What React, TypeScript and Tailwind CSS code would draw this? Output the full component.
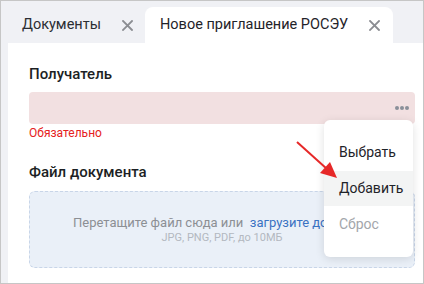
import React from 'react';

const CloseIcon: React.FC = () => (
  <svg width="11" height="11" viewBox="0 0 11 11" className="shrink-0">
    <path d="M1 1L10 10M10 1L1 10" stroke="#8b8d92" strokeWidth="1.8" strokeLinecap="square" />
  </svg>
);

const App: React.FC = () => {
  return (
    <div className="relative w-[424px] h-[284px] border border-[#c6c6c6] bg-[#f0f1f5] flex flex-col overflow-hidden font-['Roboto',sans-serif]">
      {/* tabs */}
      <div className="h-[42px] shrink-0 flex items-end">
        <div className="h-[36px] w-[144px] flex items-center pl-[21px] gap-[21px]">
          <span className="text-[14.5px] leading-5 text-[#2b2e33]">Документы</span>
          <CloseIcon />
        </div>
        <div className="h-[36px] w-[248px] flex items-center justify-between pl-[15px] pr-[13px] bg-white rounded-t-[8px]">
          <span className="text-[14.5px] leading-5 text-[#1f2329]">Новое приглашение РОСЭУ</span>
          <CloseIcon />
        </div>
      </div>

      {/* content */}
      <div className="flex-1 ml-[7px] bg-white pt-[21px] pl-[21px] pr-[8px]">
        <div className="text-[15px] leading-5 font-medium text-[#1c1f24]">Получатель</div>
        <div className="mt-[8px] h-[32px] rounded-[4px] bg-[#f2e0e1] flex items-center justify-end pr-[6px]">
          <div className="flex gap-[1px]">
            <span className="w-[4px] h-[4px] rounded-full bg-[#8a8f99]" />
            <span className="w-[4px] h-[4px] rounded-full bg-[#8a8f99]" />
            <span className="w-[4px] h-[4px] rounded-full bg-[#8a8f99]" />
          </div>
        </div>
        <div className="mt-[1px] text-[12px] leading-4 text-[#e52020]">Обязательно</div>

        <div className="mt-[21px] text-[15px] leading-5 font-medium text-[#1c1f24]">Файл документа</div>
        <div className="mt-[9px] h-[77px] rounded-[6px] border border-dashed border-[#c8d5e8] bg-[#eaf0f8] flex flex-col items-center justify-center">
          <div className="text-[13px] leading-4 text-[#8c8f94] whitespace-nowrap">
            Перетащите файл сюда или&nbsp; <span className="text-[#3a72c2]">загрузите документ</span>
          </div>
          <div className="text-[11px] leading-[14px] text-[#b3b8c0]">JPG, PNG, PDF, до 10МБ</div>
        </div>
      </div>

      {/* dropdown menu */}
      <div className="absolute left-[323px] top-[119px] w-[89px] h-[137px] bg-white rounded-[6px] shadow-[0_2px_10px_rgba(0,0,0,0.12)] py-[15px] flex flex-col">
        <div className="h-[36px] flex items-center pl-[15px] text-[14px] text-[#1f2329]">Выбрать</div>
        <div className="h-[36px] flex items-center pl-[15px] text-[14px] text-[#1f2329] bg-[#f3f4f4]">Добавить</div>
        <div className="h-[36px] flex items-center pl-[15px] text-[14px] text-[#a3a6ab]">Сброс</div>
      </div>

      {/* annotation arrow */}
      <svg className="absolute left-[-1px] top-[-1px] pointer-events-none" width="424" height="284" viewBox="0 0 424 284">
        <line x1="297" y1="142" x2="327" y2="169" stroke="#e62828" strokeWidth="2" />
        <polygon points="337,178 320,173 330,162" fill="#e62828" />
      </svg>
    </div>
  );
};

export default App;
